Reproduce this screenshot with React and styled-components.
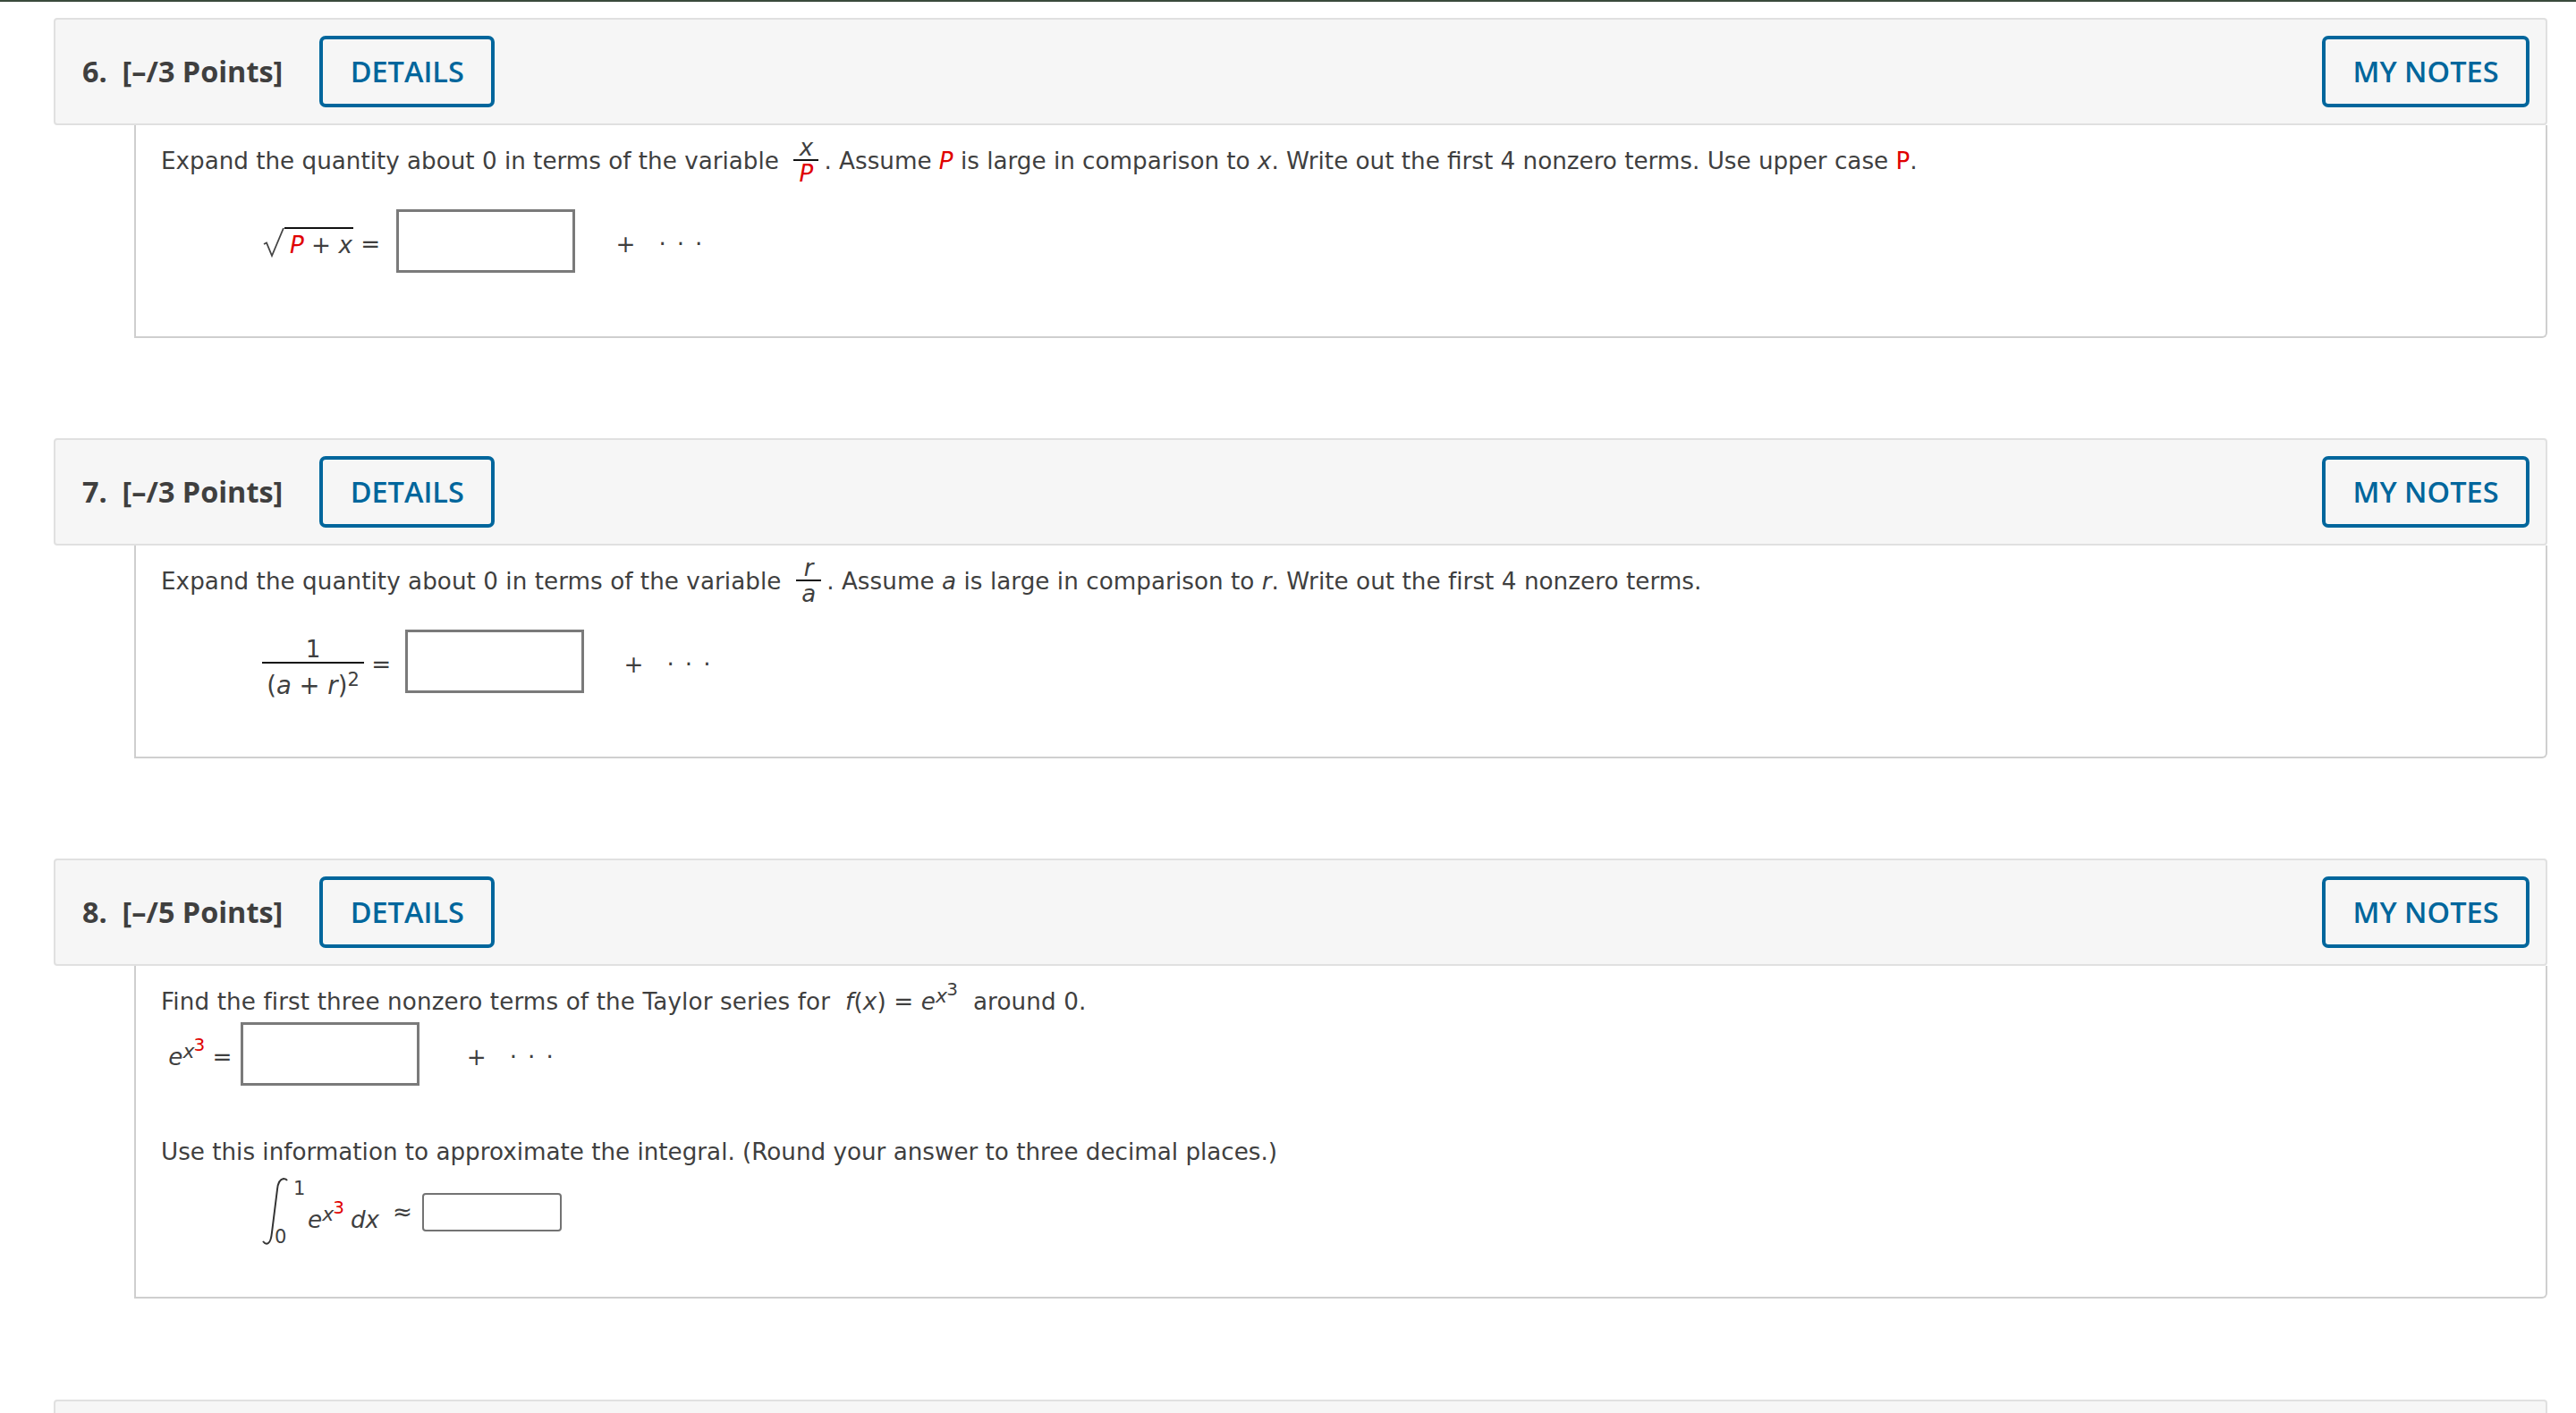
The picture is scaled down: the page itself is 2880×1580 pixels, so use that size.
import React from "react"
import styled, { createGlobalStyle } from "styled-components"

const Global = createGlobalStyle`
  html, body { margin: 0; padding: 0; background: #fff; }
  body { height: 1580px; overflow: hidden; }
`

const Page = styled.div`
  height: 1580px;
  overflow: hidden;
  box-sizing: border-box;
  border-top: 2px solid #3a4a3c;
  padding: 18px 32px 0 60px;
  font-family: "DejaVu Sans", Verdana, sans-serif;
  font-size: 26.2px;
  color: #3f3f3f;
`

const Question = styled.section`
  margin-bottom: ${p => p.$gap}px;
`

const Head = styled.header`
  box-sizing: border-box;
  height: 120px;
  display: flex;
  align-items: center;
  padding: 0 18px 0 30px;
  background: #f6f6f6;
  border: 2px solid #e0e0e0;
  border-radius: 4px;
`

const Title = styled.h3`
  margin: 0 41px 2px 0;
  font: 700 32.4px "Open Sans", sans-serif;
  color: #3f3f3f;
  white-space: pre;
`

const OutlineButton = styled.button`
  box-sizing: border-box;
  height: 80px;
  width: ${p => p.$w}px;
  margin-left: ${p => (p.$right ? "auto" : "0")};
  padding: 0 0 2px;
  background: transparent;
  border: 4px solid #00669c;
  border-radius: 7px;
  color: #00669c;
  font: 600 32.5px "Open Sans", sans-serif;
`

const Body = styled.div`
  box-sizing: border-box;
  margin-left: 90px;
  height: ${p => p.$h}px;
  padding: 15px 30px 0 28px;
  border: 2px solid #cfcfcf;
  border-top: 0;
  border-radius: 0 0 6px 0;
`

const Text = styled.p`
  margin: 0 0 ${p => p.$after || 0}px;
  height: 50px;
  display: flex;
  align-items: center;
  white-space: pre;
  letter-spacing: ${p => p.$track || 0}px;
`

const EqRow = styled.div`
  box-sizing: border-box;
  display: flex;
  align-items: center;
  margin-left: ${p => p.$indent || 0}px;
  margin-bottom: ${p => p.$after || 0}px;
  padding-top: ${p => p.$shift ?? 8}px;
  height: ${p => p.$h || 70}px;
  white-space: pre;
`

const V = styled.i`
  color: ${p => (p.$red ? "#e00000" : "inherit")};
`

const Integrand = styled.span`
  display: inline-flex;
  align-items: baseline;
  margin-top: 18px;
`

const Differential = styled(V)`
  margin-left: 7px;
`

const Approx = styled.span`
  margin-left: 15px;
`

const Red = styled.span`
  color: #e00000;
`

const InlineFraction = styled.span`
  display: inline-flex;
  flex-direction: column;
  min-width: 28px;
  text-align: center;
  margin-right: 6px;
  font-size: 26px;
  line-height: 28px;
`

const InlineNumer = styled.span`
  border-bottom: 2px solid #111;
  line-height: 26px;
`

const DisplayFraction = styled.span`
  display: inline-flex;
  flex-direction: column;
  width: 114px;
  margin-top: 16px;
  text-align: center;
`

const DisplayNumer = styled.span`
  border-bottom: 2px solid #111;
  line-height: 28px;
`

const DisplayDenom = styled.span`
  font-size: 27.5px;
  line-height: 48px;
`

const Sup = styled.sup`
  font-size: ${p => p.$size}px;
  line-height: 0;
  vertical-align: ${p => p.$raise}px;
  margin-left: ${p => p.$left || 0}px;
  color: ${p => (p.$red ? "#e00000" : "inherit")};
`

const Power = styled.span`
  display: inline-block;
`

const AnswerBox = styled.input`
  box-sizing: border-box;
  width: 200px;
  height: 71px;
  margin: 0 0 8px ${p => p.$left || 0}px;
  border: 3px solid #7a7a7a;
  border-radius: 0;
  background: #fff;
`

const SmallBox = styled.input`
  box-sizing: border-box;
  width: 156px;
  height: 43px;
  margin-left: 11px;
  border: 2.5px solid #737373;
  border-radius: 4px;
  background: #fff;
`

const PlusSign = styled.span`
  margin-left: ${p => p.$left}px;
`

const Dots = styled.span`
  margin-left: 26px;
  letter-spacing: 12px;
`

const Radical = styled.span`
  display: inline-flex;
  align-items: flex-start;
`

const RadicalBody = styled.span`
  border-top: 2.5px solid #111;
  line-height: 36px;
  padding: 0 1px 0 6px;
`

const Limits = styled.span`
  position: relative;
  display: inline-block;
  width: 16px;
  height: 76px;
  margin-right: 3px;
`

const Limit = styled.span`
  position: absolute;
  left: ${p => p.$x}px;
  top: ${p => p.$y}px;
  font-size: 21px;
  line-height: 22px;
`

const Plus = ({ left }) => (
  <>
    <PlusSign $left={left}>+</PlusSign>
    <Dots>{"···"}</Dots>
  </>
)

const Cubed = ({ red }) => (
  <Power>
    <V>e</V>
    <Sup $size={22} $raise={8}>
      <V>x</V>
      <Sup $size={20} $raise={8} $left={-1} $red={red}>3</Sup>
    </Sup>
  </Power>
)

const QuestionHead = ({ n, pts }) => (
  <Head>
    <Title>{`${n}.  [–/${pts} Points]`}</Title>
    <OutlineButton $w={196}>DETAILS</OutlineButton>
    <OutlineButton $w={232} $right>MY NOTES</OutlineButton>
  </Head>
)

export default function App() {
  return (
    <Page>
      <Global />
      <Question $gap={112}>
        <QuestionHead n={6} pts={3} />
        <Body $h={238}>
          <Text $after={29}>
            {"Expand the quantity about 0 in terms of the variable  "}
            <InlineFraction>
              <InlineNumer><V>x</V></InlineNumer>
              <V $red>P</V>
            </InlineFraction>
            {". Assume "}<V $red>P</V>{" is large in comparison to "}<V>x</V>
            {". Write out the first 4 nonzero terms. Use upper case "}<Red>P</Red>{"."}
          </Text>
          <EqRow $indent={113}>
            <Radical>
              <svg width="25" height="36" viewBox="0 0 25 36">
                <path d="M2 19 L5 17.5 L11 32 L24 1" fill="none" stroke="#444" strokeWidth="1.8" />
              </svg>
              <RadicalBody><V $red>P</V>{" + "}<V>x</V></RadicalBody>
            </Radical>
            {" = "}
            <AnswerBox $left={10} />
            <Plus left={45} />
          </EqRow>
        </Body>
      </Question>

      <Question $gap={112}>
        <QuestionHead n={7} pts={3} />
        <Body $h={238}>
          <Text $after={29} $track={0.05}>
            {"Expand the quantity about 0 in terms of the variable  "}
            <InlineFraction>
              <InlineNumer><V>r</V></InlineNumer>
              <V>a</V>
            </InlineFraction>
            {". Assume "}<V>a</V>{" is large in comparison to "}<V>r</V>
            {". Write out the first 4 nonzero terms."}
          </Text>
          <EqRow $indent={113}>
            <DisplayFraction>
              <DisplayNumer>1</DisplayNumer>
              <DisplayDenom>
                {"("}<V>a</V>{" + "}<V>r</V>{")"}<Sup $size={21} $raise={9}>2</Sup>
              </DisplayDenom>
            </DisplayFraction>
            {" = "}
            <AnswerBox $left={7} />
            <Plus left={45} />
          </EqRow>
        </Body>
      </Question>

      <Question $gap={113}>
        <QuestionHead n={8} pts={5} />
        <Body $h={372}>
          <Text $track={0.13}>
            {"Find the first three nonzero terms of the Taylor series for  "}
            <V>f</V>{"("}<V>x</V>{") = "}<Cubed />{"  around 0."}
          </Text>
          <EqRow $after={48} $shift={4}>
            <span>{" "}<Cubed red />{" = "}</span>
            <AnswerBox $left={1} />
            <Plus left={53} />
          </EqRow>
          <Text>
            Use this information to approximate the integral. (Round your answer to three decimal places.)
          </Text>
          <EqRow $indent={113} $h={84} $shift={0}>
            <svg width="32" height="78" viewBox="0 0 32 78">
              <path d="M1 72 Q4 76 7 74 Q10 72 11 62 L17 14 Q18 3 24 2 Q27 2 28 4" fill="none" stroke="#333" strokeWidth="2" />
            </svg>
            <Limits>
              <Limit $x={3} $y={1}>1</Limit>
              <Limit $x={-18} $y={55}>0</Limit>
            </Limits>
            <Integrand>
              <Cubed red />
              <Differential>dx</Differential>
            </Integrand>
            <Approx>≈</Approx>
            <SmallBox />
          </EqRow>
        </Body>
      </Question>

      <Head />
    </Page>
  )
}
